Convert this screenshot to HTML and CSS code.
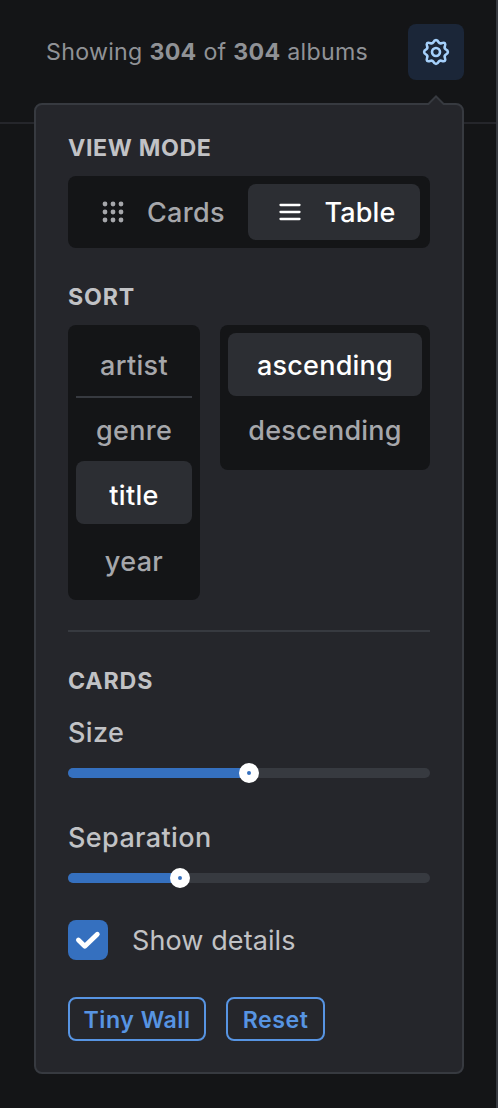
FILE: index.html
```html
<!DOCTYPE html>
<html lang="en">
<head>
<meta charset="utf-8">
<title>Albums</title>
<link rel="stylesheet" href="styles.css">
</head>
<body>
<header class="toolbar">
  <p class="count"><span class="count-text">Showing <b>304</b> of <b>304</b> albums</span></p>
  <button class="gear" aria-label="Settings">
    <svg width="28" height="28" viewBox="-14 -14 28 28" fill="none" stroke="currentColor" stroke-width="2.6" stroke-linejoin="round">
      <path d="M-2.6-9.8C-1.4-12.6 1.4-12.6 2.6-9.8 3.4-8.6 4.2-8.3 5.4-8.8 8.9-10 10-8.9 8.8-5.4 8.3-4.2 8.6-3.4 9.8-2.6 12.6-1.4 12.6 1.4 9.8 2.6 8.6 3.4 8.3 4.2 8.8 5.4 10 8.9 8.9 10 5.4 8.8 4.2 8.3 3.4 8.6 2.6 9.8 1.4 12.6-1.4 12.6-2.6 9.8-3.4 8.6-4.2 8.3-5.4 8.8-8.9 10-10 8.9-8.8 5.4-8.3 4.2-8.6 3.4-9.8 2.6-12.6 1.4-12.6-1.4-9.8-2.6-8.6-3.4-8.3-4.2-8.8-5.4-10-8.9-8.9-10-5.4-8.8-4.2-8.3-3.4-8.6-2.6-9.8z"/>
      <circle cx="0" cy="0" r="4"/>
    </svg>
  </button>
</header>

<section class="popover">
  <svg class="arrow" width="20" height="10" viewBox="0 0 20 10"><path d="M0 10 10 0 20 10z" fill="#373a40"/><path d="M2.8 10 10 2.8 17.2 10z" fill="#25262b"/></svg>
  <h2 class="heading">VIEW MODE</h2>
  <div class="segmented">
    <button class="segment">
      <svg width="24" height="24" viewBox="0 0 24 24" fill="currentColor"><circle cx="4" cy="4" r="2.4"/><circle cx="12" cy="4" r="2.4"/><circle cx="20" cy="4" r="2.4"/><circle cx="4" cy="12" r="2.4"/><circle cx="12" cy="12" r="2.4"/><circle cx="20" cy="12" r="2.4"/><circle cx="4" cy="20" r="2.4"/><circle cx="12" cy="20" r="2.4"/><circle cx="20" cy="20" r="2.4"/></svg>
      <span>Cards</span>
    </button>
    <button class="segment active">
      <svg width="24" height="24" viewBox="0 0 24 24" stroke="currentColor" stroke-width="2.3" stroke-linecap="round"><path d="M2.5 5h19M2.5 12h19M2.5 19h19"/></svg>
      <span>Table</span>
    </button>
  </div>

  <h2 class="heading sort-heading">SORT</h2>
  <div class="sort">
    <div class="options fields">
      <button class="option">artist</button>
      <button class="option ruled">genre</button>
      <button class="option active raised">title</button>
      <button class="option">year</button>
    </div>
    <div class="options directions">
      <button class="option active">ascending</button>
      <button class="option">descending</button>
    </div>
  </div>

  <hr class="divider">

  <h2 class="heading cards-heading">CARDS</h2>
  <p class="label size-label">Size</p>
  <div class="slider"><div class="fill" style="width:50%"><i class="thumb"></i></div></div>
  <p class="label separation-label">Separation</p>
  <div class="slider"><div class="fill" style="width:31%"><i class="thumb"></i></div></div>
  <div class="check">
    <span class="box"><svg width="26" height="20" viewBox="0 0 26 20" fill="none" stroke="#fff" stroke-width="4.8" stroke-linecap="round" stroke-linejoin="round"><path d="M3.4 10l6.4 6.2L22.3 4.2"/></svg></span>
    <span class="label details">Show details</span>
  </div>
  <div class="actions">
    <button class="action tiny">Tiny Wall</button>
    <button class="action reset">Reset</button>
  </div>
</section>
</body>
</html>
```
FILE: styles.css
```css
* { box-sizing: border-box; margin: 0; }
body {
  position: relative;
  width: 498px;
  height: 1108px;
  overflow: hidden;
  background: #141517;
  border-right: 2px solid #373a40;
  color: #c1c2c5;
  font-family: Inter, sans-serif;
}
button { border: 0; padding: 0; background: none; color: inherit; font: inherit; letter-spacing: inherit; }
svg { display: block; flex: none; }
.toolbar {
  display: flex;
  justify-content: space-between;
  height: 124px;
  padding: 24px 32px 0 46px;
  border-bottom: 2px solid #25262b;
}
.count { font-size: 23.2px; line-height: 56px; color: #909296; letter-spacing: .29px; white-space: nowrap; }
.gear {
  display: grid;
  place-items: center;
  width: 56px;
  height: 56px;
  border-radius: 8px;
  background: #1b2638;
  color: #a5d0fb;
}
.popover {
  position: absolute;
  left: 34px;
  top: 103px;
  width: 430px;
  height: 971px;
  padding: 28px 32px 0;
  border: 2px solid #373a40;
  border-radius: 8px;
  background: #25262b;
}
.arrow { position: absolute; right: 16px; top: -10px; }
.heading { font-size: 23.2px; line-height: 30px; font-weight: 700; letter-spacing: .65px; }
.segmented {
  display: flex;
  height: 72px;
  margin-top: 13px;
  padding: 8px 10px 8px 8px;
  border-radius: 8px;
  background: #141517;
}
.segment {
  display: flex;
  align-items: center;
  justify-content: flex-start;
  gap: 22px;
  width: 172px;
  padding-left: 25px;
  border-radius: 8px;
  color: #a6a7ab;
  font-size: 27px;
  font-weight: 500;
  letter-spacing: .3px;
}
.segment.active { padding-left: 30px; gap: 22.5px; letter-spacing: .15px; color: #fff; }
.active { background: #2c2e33; }
.sort-heading { margin-top: 34px; letter-spacing: .85px; }
.cards-heading { letter-spacing: .85px; }
.sort { display: flex; align-items: flex-start; gap: 20px; margin-top: 13px; }
.options {
  display: flex;
  flex-direction: column;
  gap: 2.4px;
  padding: 8px;
  border-radius: 8px;
  background: #141517;
  letter-spacing: .35px;
}
.fields { width: 132px; height: 275px; }
.directions { width: 210px; height: 145px; letter-spacing: .23px; }
.option {
  height: 63px;
  padding-top: 2px;
  border-radius: 8px;
  color: #a6a7ab;
  font-size: 27px;
  line-height: 61px;
  font-weight: 500;
}
.ruled { margin-top: -2.4px; height: 65.4px; border-top: 2px solid #373a40; border-radius: 0; letter-spacing: .3px; }
.option.active { color: #fff; }
.raised { margin: -2.7px 0 2.7px; padding-top: 4.5px; }
.divider { height: 2px; margin: 30px 0 34px; border: 0; background: #373a40; }
.label { font-size: 27px; line-height: 36px; letter-spacing: .38px; }
.size-label { margin-top: 19px; }
.slider { height: 10px; margin-top: 17px; border-radius: 5px; background: #373a40; }
.fill { display: flex; align-items: center; justify-content: flex-end; height: 10px; border-radius: 5px; background: #3570bf; }
.thumb { flex: none; width: 20px; height: 20px; margin-right: -10px; border: 8px solid #fff; border-radius: 50%; background: #3570bf; }
.separation-label { margin-top: 42px; }
.size-label, .separation-label { font-weight: 450; }
.check { display: flex; align-items: center; gap: 24px; margin-top: 37px; }
.details { padding-top: 2px; letter-spacing: .1px; }
.box { display: grid; place-items: center; width: 40px; height: 40px; border-radius: 8px; background: #3570bf; }
.actions { display: flex; gap: 20px; margin-top: 37px; }
.action {
  height: 44px;
  padding-top: 2px;
  border: 2px solid #5794e2;
  border-radius: 8px;
  color: #5794e2;
  font-size: 23.2px;
  font-weight: 600;
  letter-spacing: .5px;
}
.tiny { width: 138px; }
.reset { width: 99px; }
```
